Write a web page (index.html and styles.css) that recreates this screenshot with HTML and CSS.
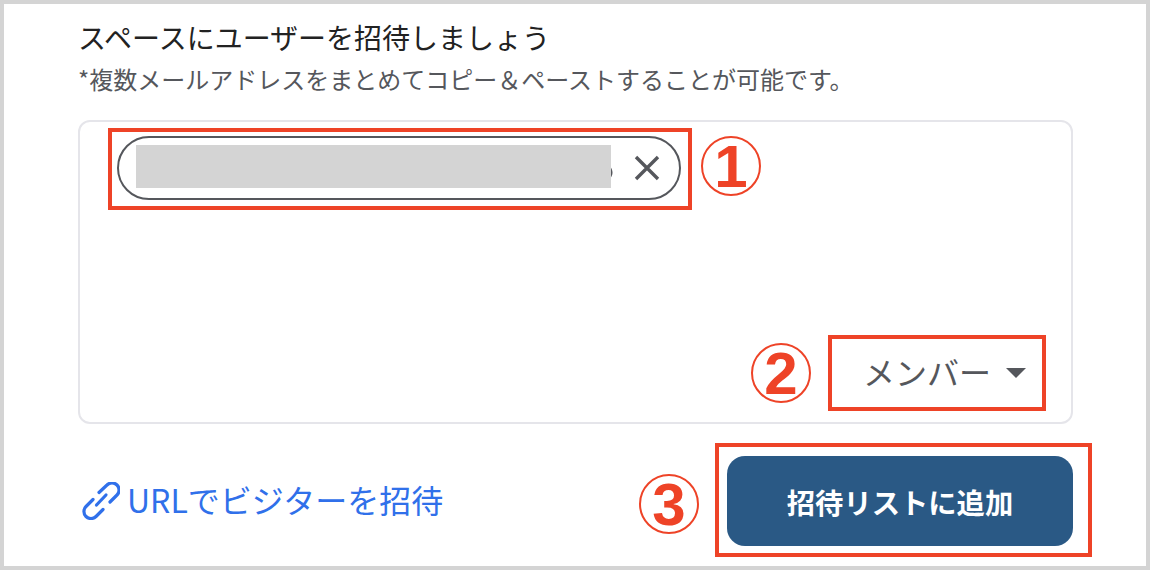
FILE: index.html
```html
<!DOCTYPE html>
<html lang="ja">

<head>
    <meta charset="UTF-8">
    <title>スペースにユーザーを招待</title>
    <link rel="stylesheet" href="styles.css">
</head>

<body>
    <div class="frame">
        <h1 class="title">スペースにユーザーを招待しましょう</h1>
        <p class="note">*複数メールアドレスをまとめてコピー＆ペーストすることが可能です。</p>

        <div class="inviteBox">
            <div class="chip">
                <span class="email">o</span>
                <svg class="closeIcon" viewBox="0 0 26 26">
                    <path d="M2 2 L24 24 M24 2 L2 24"></path>
                </svg>
            </div>
            <div class="roleSelect">
                <span>メンバー</span>
                <span class="caret"></span>
            </div>
        </div>

        <div class="footer">
            <a class="urlLink" href="#">
                <svg class="linkIcon" viewBox="6 5 38 38">
                    <path d="M23 15.5 L31 8 A7 7 0 0 1 41 18 L34 25"></path>
                    <path d="M17 22.5 L10 29.5 A7 7 0 0 0 20 39.5 L27 32.5"></path>
                    <path d="M20.5 28 L30 18"></path>
                </svg>
                <span class="urlText">URLでビジターを招待</span>
            </a>
            <button class="addButton">招待リストに追加</button>
        </div>

        <!-- annotations drawn over the screenshot -->
        <div class="redact"></div>
        <div class="mark markChip"></div>
        <div class="mark markRole"></div>
        <div class="mark markButton"></div>
        <div class="num numOne">1</div>
        <div class="num numTwo">2</div>
        <div class="num numThree">3</div>
    </div>
</body>

</html>
```

FILE: styles.css
```css
* {
    box-sizing: border-box;
}

body {
    margin: 0;
    font-family: "Noto Sans CJK JP", "Noto Sans", sans-serif;
    background: #fff;
}

.frame {
    position: relative;
    width: 1150px;
    height: 570px;
    border: 4px solid #d4d4d4;
    padding: 13px 73px 0 74px;
    overflow: hidden;
}

.title {
    margin: 0;
    font-size: 28px;
    font-weight: 400;
    line-height: 40px;
    color: #222;
}

.note {
    margin: 5px 0 0;
    font-size: 24px;
    line-height: 34px;
    color: #55575c;
}

.inviteBox {
    display: flex;
    flex-direction: column;
    justify-content: space-between;
    align-items: flex-start;
    height: 304px;
    margin-top: 24px;
    padding: 14px 45px 28px 37px;
    border: 2px solid #e5e5ea;
    border-radius: 12px;
}

.chip {
    display: flex;
    justify-content: space-between;
    align-items: center;
    width: 564px;
    height: 64px;
    padding: 0 19px 0 18px;
    border: 2px solid #55575c;
    border-radius: 32px;
}

.email {
    width: 477px;
    text-align: right;
    font-size: 28px;
    color: #55575c;
    will-change: transform;
}

.closeIcon {
    width: 26px;
    height: 26px;
}

.closeIcon path {
    fill: none;
    stroke: #55575c;
    stroke-width: 3.4;
}

.roleSelect {
    display: flex;
    align-items: center;
    gap: 15px;
    align-self: flex-end;
    font-size: 32px;
    line-height: 46px;
    color: #55575c;
}

.caret {
    width: 0;
    height: 0;
    margin-top: 3px;
    border-left: 10px solid transparent;
    border-right: 10px solid transparent;
    border-top: 10px solid #55575c;
}

.footer {
    display: flex;
    justify-content: space-between;
    align-items: center;
    margin-top: 32px;
}

.urlLink {
    display: flex;
    align-items: center;
    gap: 7px;
    margin-left: 4px;
    font-size: 32px;
    color: #3070ea;
    text-decoration: none;
}

.urlText {
    margin-bottom: 4px;
}

.linkIcon {
    width: 38px;
    height: 38px;
    fill: none;
    stroke: #3070ea;
    stroke-width: 3.2;
    stroke-linecap: round;
    stroke-linejoin: round;
}

.addButton {
    width: 346px;
    height: 90px;
    border: none;
    border-radius: 18px;
    background: #2a5985;
    color: #fff;
    font-family: inherit;
    font-size: 28.3px;
    font-weight: 700;
}

/* annotations */
.redact {
    position: absolute;
    left: 132px;
    top: 141px;
    width: 475px;
    height: 43px;
    background: #d4d4d4;
}

.mark {
    position: absolute;
    border: 4px solid #ee4327;
}

.markChip {
    left: 104px;
    top: 124px;
    width: 584px;
    height: 82px;
}

.markRole {
    left: 824px;
    top: 331px;
    width: 218px;
    height: 76px;
}

.markButton {
    left: 711px;
    top: 439px;
    width: 377px;
    height: 114px;
}

.num {
    position: absolute;
    display: flex;
    justify-content: center;
    align-items: center;
    width: 60px;
    height: 60px;
    border: 2px solid #ee4327;
    border-radius: 50%;
    font-family: "Liberation Sans", sans-serif;
    font-size: 60px;
    font-weight: 700;
    color: #ee4327;
}

.numOne {
    left: 697px;
    top: 132px;
}

.numTwo {
    left: 747px;
    top: 339px;
}

.numThree {
    left: 635px;
    top: 470px;
}
```
